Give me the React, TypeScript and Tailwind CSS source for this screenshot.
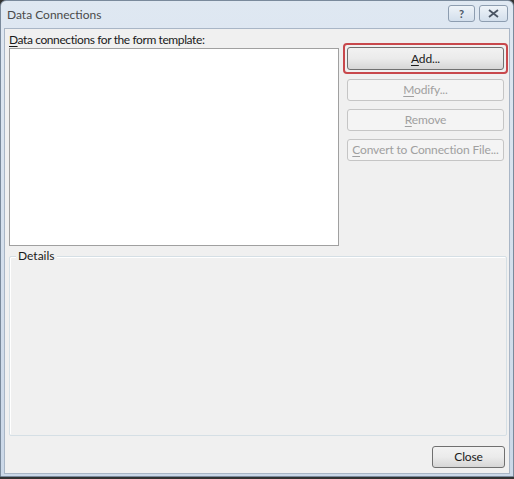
import React from "react";

const font = { fontFamily: 'Lato, "Noto Sans", "Liberation Sans", sans-serif' };

function Btn({ children, disabled, className = "" }: { children: React.ReactNode; disabled?: boolean; className?: string }) {
  return (
    <div
      className={
        "flex items-center justify-center rounded-[3px] border text-[12px] whitespace-nowrap tracking-[-0.15px] " +
        (disabled
          ? "border-[#c5c5c5] bg-[#f4f4f4] text-[#a0a0a0] "
          : "border-[#707070] bg-gradient-to-b from-[#f2f2f2] via-[#ebebeb] to-[#d6d6d6] text-[#1a1a1a] ") +
        className
      }
    >
      {children}
    </div>
  );
}

export default function App() {
  return (
    <div className="w-[514px] h-[479px] bg-[#333] overflow-hidden" style={font}>
      <div className="w-[514px] h-[477px] bg-gradient-to-b from-[#dfe8f2] to-[#cbd8e8] rounded-t-[6px] border border-[#7a8a9c] flex flex-col">
        {/* title bar */}
        <div className="h-[27px] flex items-center pl-[6px] pr-[5px] shrink-0">
          <div className="text-[12px] text-[#4a4a4a] flex-1">Data Connections</div>
          <div className="flex gap-[4px] mb-[2px]">
            <div className="w-[27px] h-[17px] rounded-[3px] border border-[#8d9db0] bg-gradient-to-b from-[#eef3f8] to-[#d3dfec] flex items-center justify-center text-[11px] font-bold text-[#4a5564] leading-none">?</div>
            <div className="w-[29px] h-[17px] rounded-[3px] border border-[#8d9db0] bg-gradient-to-b from-[#eef3f8] to-[#d3dfec] flex items-center justify-center">
              <svg width="11" height="9" viewBox="0 0 11 9">
                <path d="M1 1 L10 8 M10 1 L1 8" stroke="#4a5564" strokeWidth="1.8" fill="none" />
              </svg>
            </div>
          </div>
        </div>
        {/* client */}
        <div className="flex-1 mx-[3px] mb-[2px] bg-[#f0f0f0] border border-[#a9b6c6] flex flex-col text-[#1a1a1a]">
          <div className="flex">
            <div className="flex flex-col pl-[4px]">
              <div className="h-[19px] pt-[3px] text-[12px] leading-[15px] tracking-[-0.4px]">
                <span className="underline underline-offset-2">D</span>ata connections for the form template:
              </div>
              <div className="w-[330px] h-[198px] bg-white border border-[#a0a0a0]" />
            </div>
            <div className="flex flex-col ml-[4px] mt-[14px] gap-[5px]">
              <div className="w-[165px] h-[31px] rounded-[4px] border-2 border-[#c8484c] p-[2px] bg-[#f0f0f0]">
                <Btn className="h-[23px] w-full">
                  <span><span className="underline underline-offset-2">A</span>dd...</span>
                </Btn>
              </div>
              <div className="flex flex-col gap-[8px] pl-[4px]">
                <Btn disabled className="h-[22px] w-[157px]">
                  <span><span className="underline underline-offset-2">M</span>odify...</span>
                </Btn>
                <Btn disabled className="h-[22px] w-[157px]">
                  <span><span className="underline underline-offset-2">R</span>emove</span>
                </Btn>
                <Btn disabled className="h-[22px] w-[157px]">
                  <span><span className="underline underline-offset-2">C</span>onvert to Connection File...</span>
                </Btn>
              </div>
            </div>
          </div>
          <div className="relative ml-[4px] mt-[10px] w-[498px] h-[180px] border border-[#d5dfe5] rounded-[2px] shadow-[inset_1px_1px_0_#fff]">
            <div className="absolute left-[6px] -top-[9px] px-[2px] bg-[#f0f0f0] text-[12px] leading-[15px]">Details</div>
          </div>
          <div className="flex justify-end pr-[4px] mt-[10px]">
            <Btn className="w-[73px] h-[22px]">Close</Btn>
          </div>
        </div>
      </div>
    </div>
  );
}
